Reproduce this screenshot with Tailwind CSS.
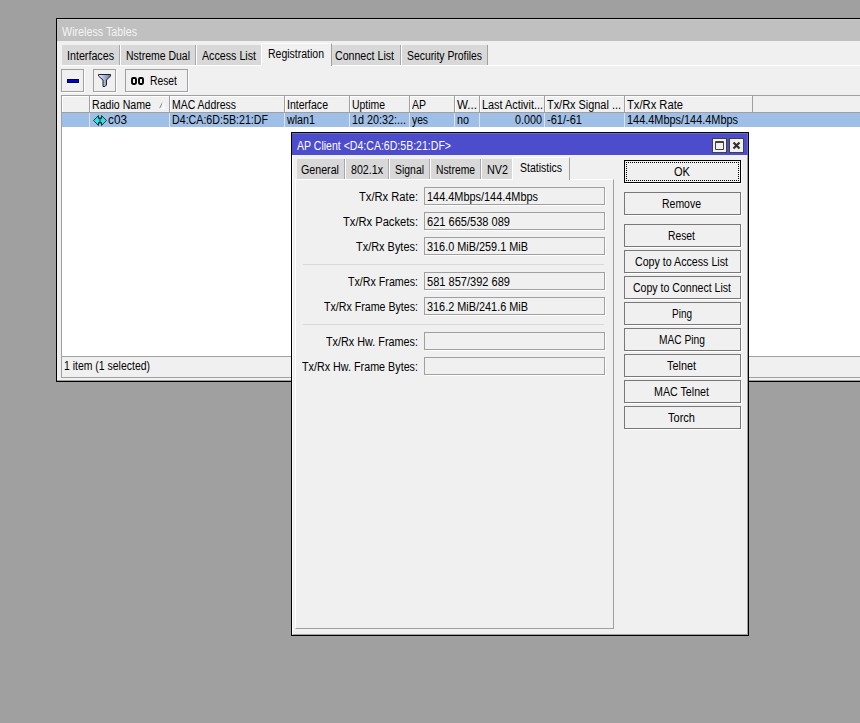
<!DOCTYPE html>
<html lang="en">
<head>
<meta charset="utf-8">
<title>Wireless Tables</title>
<script src="https://cdn.jsdelivr.net/npm/@tailwindcss/browser@4"></script>
</head>
<body class="relative h-[723px] w-[860px] overflow-hidden bg-[#a0a0a0] font-['Liberation_Sans',Arial,sans-serif] text-[12px] leading-[14px] text-black">

<!-- Wireless Tables window -->
<section class="absolute left-[56px] top-[18px] flex h-[364px] w-[804px] flex-col overflow-hidden border border-r-0 border-black bg-[#f0f0f0]">
  <header class="flex h-[22px] shrink-0 items-center border-t border-[#c8c8c8] bg-[#c0c0c0] pl-[5px] pt-[3px] text-[#f4f4f4]"><span data-w="75">Wireless Tables</span></header>
  <div class="flex min-h-0 grow flex-col border-b border-[#a0a0a0] pl-1">
    <nav class="flex h-[25px] shrink-0 items-end border-b border-white pl-px pt-[2px]">
      <div class="flex h-5 w-[58px] items-center border-r border-[#a8a8a8] bg-[#d8d8d8] pl-[5px] pt-[2px]"><span data-w="47">Interfaces</span></div>
      <div class="flex h-5 w-[76px] items-center border-r border-l border-[#a8a8a8] border-l-white bg-[#d8d8d8] pl-[5px] pt-[2px]"><span data-w="64">Nstreme Dual</span></div>
      <div class="flex h-5 w-[65px] items-center border-l border-white bg-[#d8d8d8] pl-[5px] pt-[2px]"><span data-w="54">Access List</span></div>
      <div class="-mb-px flex h-[23px] w-[71px] items-center border-l border-t border-r border-white border-r-[#a0a0a0] bg-[#f0f0f0] pb-[2px] pl-[6px]"><span data-w="56">Registration</span></div>
      <div class="flex h-5 w-[69px] items-center border-r border-[#a8a8a8] bg-[#d8d8d8] pl-[3px] pt-[2px]"><span data-w="59">Connect List</span></div>
      <div class="flex h-5 w-[87px] items-center border-r border-l border-[#a0a0a0] border-l-white bg-[#d8d8d8] pl-[5px] pt-[2px]"><span data-w="75">Security Profiles</span></div>
    </nav>
    <div class="flex h-[29px] shrink-0 pt-[3px]">
      <div class="flex size-[23px] items-center justify-center border border-[#a0a0a0] shadow-[1px_1px_#fff]">
        <svg class="h-[4px] w-3" viewBox="0 0 12 4"><rect width="12" height="4" fill="#000040"/><rect x="1" y="1" width="10" height="2" fill="#0000d8"/></svg>
      </div>
      <div class="ml-[9px] flex size-[23px] items-center justify-center border border-[#a0a0a0] shadow-[1px_1px_#fff]">
        <svg class="h-[13px] w-[13px]" viewBox="0 0 13 13"><defs><linearGradient id="steel"><stop offset="0" stop-color="#e4ecff"/><stop offset="1" stop-color="#6878a8"/></linearGradient></defs><path d="M.5.5h12v1.500l-4 4v5l-1.500 1.500H5v-6.500l-4.500-4z" fill="url(#steel)" stroke="#202028"/></svg>
      </div>
      <div class="ml-[9px] flex h-[23px] w-[63px] items-center border border-[#a0a0a0] pl-[5px] shadow-[1px_1px_#fff]">
        <svg class="mt-px h-[8px] w-[13px]" viewBox="0 0 13 8" fill="none" stroke="#000" stroke-width="1.900"><rect x="1" y="1" width="4" height="6" rx="1.200"/><rect x="8" y="1" width="4" height="6" rx="1.200"/></svg>
        <span data-w="27" class="ml-[6px]">Reset</span>
      </div>
    </div>
    <div class="flex h-[282px] shrink-0 flex-col border-l border-t border-[#a0a0a0] bg-white">
      <div id="head" class="flex h-[17px] shrink-0 border-b border-[#a0a0a0] bg-[#f0f0f0]"></div>
      <div id="row" class="flex h-[14px] shrink-0 bg-[#9fbfe7]"></div>
      <div class="grow"></div>
      <div class="flex h-[21px] shrink-0 items-center border-t border-[#a0a0a0] bg-[#f0f0f0] pb-[2px] pl-[2px]"><span data-w="86">1 item (1 selected)</span></div>
    </div>
    <div class="h-px shrink-0 bg-[#a0a0a0]"></div>
  </div>
</section>

<!-- AP Client dialog -->
<section class="absolute left-[291px] top-[132px] flex h-[504px] w-[458px] flex-col border border-black bg-[#f0f0f0]">
  <header class="flex h-[22px] shrink-0 items-center border-t border-r border-[#6868c8] bg-[#4c4ccc] pl-[5px] pr-[3px] text-white">
    <span data-w="154" class="mt-[2px]">AP Client &lt;D4:CA:6D:5B:21:DF&gt;</span>
    <svg class="ml-auto mt-px size-[15px]" viewBox="0 0 15 15"><rect x=".5" y=".5" width="14" height="14" fill="#f0f0f0" stroke="#404040"/><path d="M3.500 3.500h8v8h-8zM3 4.500h9" fill="none" stroke="#404040"/></svg>
    <svg class="ml-[2px] mt-px size-[15px]" viewBox="0 0 15 15"><rect x=".5" y=".5" width="14" height="14" fill="#f0f0f0" stroke="#404040"/><path d="M4.500 4.500l6 6m0-6l-6 6" stroke="#303030" stroke-width="2.200"/></svg>
  </header>
  <div class="flex grow border-r border-b border-l border-[#a0a0a0] border-l-white">
    <div class="flex w-[321px] flex-col pl-[2px] pt-[2px]">
      <nav class="flex h-[22px] shrink-0 items-end pl-[2px]">
        <div class="flex h-[20px] w-[48px] items-center border-r border-[#a8a8a8] bg-[#d8d8d8] pl-1 pt-[2px]"><span data-w="38">General</span></div>
        <div class="flex h-[20px] w-[44px] items-center border-r border-l border-[#a8a8a8] border-l-white bg-[#d8d8d8] pl-[5px] pt-[2px]"><span data-w="32">802.1x</span></div>
        <div class="flex h-[20px] w-[41px] items-center border-r border-l border-[#a8a8a8] border-l-white bg-[#d8d8d8] pl-[5px] pt-[2px]"><span data-w="29">Signal</span></div>
        <div class="flex h-[20px] w-[51px] items-center border-r border-l border-[#a8a8a8] border-l-white bg-[#d8d8d8] pl-[5px] pt-[2px]"><span data-w="39">Nstreme</span></div>
        <div class="flex h-[20px] w-[31px] items-center border-l border-white bg-[#d8d8d8] pl-[5px] pt-[2px]"><span data-w="21">NV2</span></div>
        <div class="relative -mb-px flex h-[23px] w-[58px] items-center border-l border-t border-r border-white border-r-[#a0a0a0] bg-[#f0f0f0] pb-[2px] pl-[7px]"><span data-w="42">Statistics</span></div>
      </nav>
      <div id="fields" class="flex h-[450px] shrink-0 flex-col border-l border-t border-r border-b border-[#a0a0a0] border-l-white border-t-white pl-[7px] pr-[9px] pt-[7px]"></div>
    </div>
    <div id="buttons" class="ml-[10px] flex w-[117px] flex-col pt-[5px]"></div>
  </div>
</section>

<script>
const columns = [
  ['', 28, 0, '', 0],
  ['Radio Name', 80, 59, 'c03', 19],
  ['MAC Address', 115, 64, 'D4:CA:6D:5B:21:DF', 96],
  ['Interface', 65, 41, 'wlan1', 28],
  ['Uptime', 60, 33, '1d 20:32:...', 54],
  ['AP', 45, 14, 'yes', 16],
  ['W...', 25, 20, 'no', 12],
  ['Last Activit...', 65, 61, '0.000', 27],
  ['Tx/Rx Signal ...', 80, 74, '-61/-61', 35],
  ['Tx/Rx Rate', 128, 56, '144.4Mbps/144.4Mbps', 111],
];
const text = (t, w) => t ? `<span data-w="${w}">${t}</span>` : '';
const sort = '<svg class="ml-auto mr-[4px] h-[7px] w-[6px]" viewBox="0 0 6 7" fill="none"><path d="M.5 6.500L3.500.5" stroke="#888"/><path d="M3.500.5l2 6H.5" stroke="#fff"/></svg>';
const link = '<svg class="ml-px mr-px h-[11px] w-[14px] shrink-0" viewBox="0 0 14 11"><path d="M5.500 .5v3h3v-3l5 5-5 5v-3h-3v3l-5-5z" fill="#30e0e0" stroke="#103840"/><path d="M7 2v7" stroke="#103840"/></svg>';
head.innerHTML = columns.map(([h, w, tw], i) =>
  `<div class="flex shrink-0 items-center border-r border-[#a0a0a0] pl-[2px] pt-[2px] shadow-[inset_1px_1px_#fff]" style="width:${w}px">${text(h, tw)}${i === 1 ? sort : ''}</div>`).join('');
row.innerHTML = columns.map(([, w, , v, tw], i) =>
  `<div class="flex shrink-0 items-center border-r pl-[2px] ${i === 7 ? 'justify-end pr-[2px]' : ''} ${i === 9 ? 'border-transparent' : 'border-[#d8e4f0]'}" style="width:${w}px">${i === 1 ? link : ''}${text(v, tw)}</div>`).join('');

const rule = '<div class="mb-[7px] mt-[2px] h-px shrink-0 bg-[#d8d8d8]"></div>';
fields.innerHTML = [
  ['Tx/Rx Rate:', 59, '144.4Mbps/144.4Mbps', 111],
  ['Tx/Rx Packets:', 75, '621 665/538 089', 83],
  ['Tx/Rx Bytes:', 62, '316.0 MiB/259.1 MiB', 101],
  null,
  ['Tx/Rx Frames:', 70, '581 857/392 689', 83],
  ['Tx/Rx Frame Bytes:', 94, '316.2 MiB/241.6 MiB', 101],
  null,
  ['Tx/Rx Hw. Frames:', 92, '', 0],
  ['Tx/Rx Hw. Frame Bytes:', 116, '', 0],
].map(f => f ? `<div class="mb-[7px] flex h-[18px] shrink-0 items-center">
  <div class="flex w-[115px] shrink-0 justify-end pt-[2px]">${text(f[0], f[1])}</div>
  <div class="ml-[6px] flex h-[18px] w-[181px] shrink-0 items-center border border-[#a0a0a0] pl-[2px] pt-[2px] shadow-[1px_1px_#fff]">${text(f[2], f[3])}</div></div>` : rule).join('');

buttons.innerHTML = [['OK', 16], ['Remove', 39], ['Reset', 27], ['Copy to Access List', 93], ['Copy to Connect List', 98],
  ['Ping', 20], ['MAC Ping', 46], ['Telnet', 29], ['MAC Telnet', 55], ['Torch', 27]].map(([t, w], i) =>
  `<div class="flex h-[23px] shrink-0 items-center justify-center border shadow-[1px_1px_#fff] ${i < 2 ? 'mb-[9px]' : 'mb-[3px]'} ${i ? 'border-[#787878] pr-[2px]' : 'border-black p-px'}">${i ? text(t, w) : `<div class="flex h-[19px] w-full items-center justify-center border border-dotted border-black pr-[2px]">${text(t, w)}</div>`}</div>`).join('');

function fit() {
  for (const el of document.querySelectorAll('[data-w]')) {
    el.classList.add('inline-block', 'shrink-0', 'origin-left', 'whitespace-nowrap');
    el.style.transform = 'none';
    el.style.marginRight = '0';
    const natural = el.getBoundingClientRect().width;
    el.style.transform = `scaleX(${el.dataset.w / natural})`;
    el.style.marginRight = `${el.dataset.w - natural}px`;
  }
}
fit();
addEventListener('load', fit);
document.fonts.ready.then(fit);
setTimeout(fit, 50);
</script>
</body>
</html>
